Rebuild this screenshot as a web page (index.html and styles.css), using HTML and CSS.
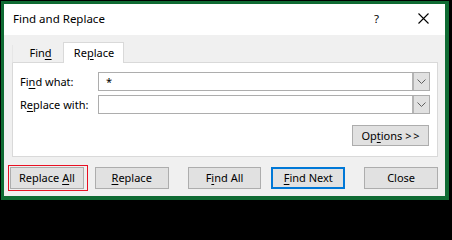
FILE: index.html
```html
<!DOCTYPE html>
<html>
<head>
<meta charset="utf-8">
<link rel="stylesheet" href="styles.css">
</head>
<body>
<div class="frame">
  <div class="dialog">
    <div class="titlebar">
      <span class="title">Find and Replace</span>
      <span class="help">?</span>
      <span class="close"><svg width="11" height="11" viewBox="0 0 11 11"><path d="M0.5 0.5L10.5 10.5M10.5 0.5L0.5 10.5" stroke="#000" stroke-width="1.1" fill="none"/></svg></span>
    </div>
    <div class="content">
      <div class="tabs">
        <div class="tab"><span>Fin<u>d</u></span></div>
        <div class="tab active"><span>Re<u>p</u>lace</span></div>
        <div class="tab-fill"></div>
      </div>
      <div class="panel">
        <div class="row">
          <span class="label">Fi<u>n</u>d what:</span>
          <div class="combo"><div class="field">*</div><div class="drop"><svg width="9" height="5" viewBox="0 0 9 5"><path d="M0.5 0.5L4.5 4.5L8.5 0.5" stroke="#606060" stroke-width="1" fill="none"/></svg></div></div>
        </div>
        <div class="row">
          <span class="label">R<u>e</u>place with:</span>
          <div class="combo"><div class="field"></div><div class="drop"><svg width="9" height="5" viewBox="0 0 9 5"><path d="M0.5 0.5L4.5 4.5L8.5 0.5" stroke="#606060" stroke-width="1" fill="none"/></svg></div></div>
        </div>
        <div class="opts-row">
          <div class="btn opts"><span>Op<u>t</u>ions &gt;&#8201;&gt;</span></div>
        </div>
      </div>
      <div class="buttons">
        <div class="btn b-all marked"><span>Replace <u>A</u>ll</span></div>
        <div class="btn b-rep"><span><u>R</u>eplace</span></div>
        <div class="btn b-fall"><span>F<u>i</u>nd All</span></div>
        <div class="btn b-fnext default"><span><u>F</u>ind Next</span></div>
        <div class="btn b-close"><span>Close</span></div>
      </div>
    </div>
  </div>
</div>
</body>
</html>
```

FILE: styles.css
```css
* { box-sizing: border-box; }
html, body { margin: 0; padding: 0; background: #000; }
body {
  width: 452px;
  height: 203px;
  overflow: hidden;
  font-family: "Noto Sans", "Liberation Sans", sans-serif;
  font-size: 11px;
  color: #000;
}
u { text-underline-offset: 2px; text-decoration-thickness: 1px; }
.frame {
  margin: 1px 3px 3px 1px;
  width: 448px;
  height: 199px;
  border: 3px solid #0f6b33;
  border-right-width: 4px;
  border-bottom-width: 4px;
}
.dialog {
  width: 100%;
  height: 100%;
  background: #f0f0f0;
  display: flex;
  flex-direction: column;
}
.titlebar {
  height: 31px;
  background: #fff;
  display: flex;
  align-items: center;
  padding-left: 9px;
  flex: none;
}
.title { flex: 1; font-size: 11.5px; padding-bottom: 2px; }
.help { width: 8px; margin-right: 36px; font-size: 11.5px; padding-bottom: 2px; }
.close { width: 11px; margin-right: 16px; height: 11px; display: flex; margin-bottom: 2px; }
.content {
  padding: 7px 7px 0 8px;
  flex: 1;
  display: flex;
  flex-direction: column;
}
.tabs {
  display: flex;
  align-items: flex-end;
  height: 21px;
}
.tab {
  height: 18px;
  width: 51px;
  display: flex;
  justify-content: center;
  align-items: center;
  padding-left: 5px;
  padding-bottom: 2px;
  border-bottom: 1px solid #d9d9d9;
  border-left: 1px solid #e6e6e6;
}
.tab.active {
  height: 21px;
  width: 61px;
  background: #fff;
  border: 1px solid #d9d9d9;
  border-bottom: none;
  padding-left: 1px;
  padding-bottom: 1px;
}
.tab-fill { flex: 1; border-bottom: 1px solid #d9d9d9; }
.panel {
  height: 94px;
  background: #fff;
  border: 1px solid #d9d9d9;
  border-top: none;
  padding: 9px 7px 0 7px;
  display: flex;
  flex-direction: column;
}
.row {
  display: flex;
  align-items: center;
  height: 19px;
  margin-bottom: 4px;
}
.label { width: 78px; padding-bottom: 1px; }
.combo {
  flex: 1;
  height: 19px;
  display: flex;
  border: 1px solid #adadad;
  background: #fff;
}
.field { flex: 1; padding: 1px 0 0 7px; line-height: 16px; }
.drop {
  width: 17px;
  background: #e1e1e1;
  border-left: 2px solid #b4b4b4;
  display: flex;
  align-items: center;
  justify-content: center;
}
.opts-row {
  display: flex;
  justify-content: flex-end;
  margin-top: 7px;
  padding-right: 1px;
}
.btn {
  background: #e1e1e1;
  border: 1px solid #adadad;
  display: flex;
  align-items: center;
  justify-content: center;
  padding-bottom: 1px;
  position: relative;
  white-space: pre;
}
.opts { width: 77px; height: 21px; }
.buttons {
  display: flex;
  margin-top: 10px;
  margin-left: -2px;
}
.buttons .btn { width: 74px; height: 22px; }
.b-rep { margin-left: 11px; }
.b-fall { margin-left: 19px; }
.b-fnext { margin-left: 10px; }
.b-close { margin-left: 19px; }
.default { border: 2px solid #0078d7; }
.marked::after {
  content: "";
  position: absolute;
  left: -3px;
  right: -5px;
  top: -3px;
  bottom: -3px;
  border: 1px solid #e81123;
}
```
